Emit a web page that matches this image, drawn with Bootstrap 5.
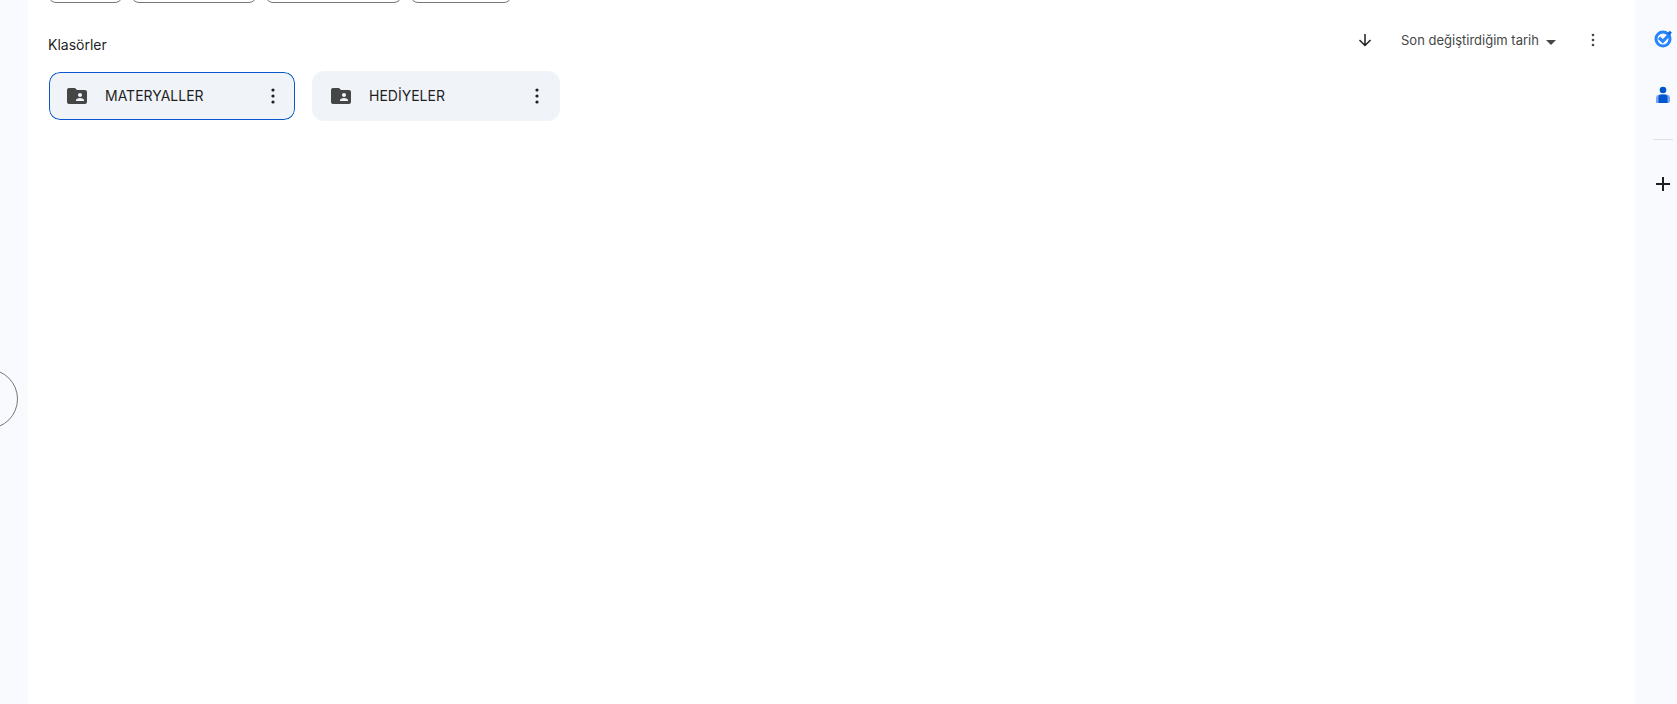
<!DOCTYPE html>
<html lang="tr">
<head>
<meta charset="utf-8">
<meta name="viewport" content="width=device-width, initial-scale=1">
<title>Klasörler</title>
<link href="https://cdn.jsdelivr.net/npm/bootstrap@5.3.0/dist/css/bootstrap.min.css" rel="stylesheet">
<style>
  body { font-family: Inter, Roboto, "Liberation Sans", sans-serif; font-size: 14px; line-height: 20px; color: #1f1f1f; background: #f8fafd; }
  .left-rail { width: 28px; }
  .rail-circle { width: 60px; height: 60px; right: 10px; top: 369px; border: 1px solid #747775; border-radius: 50%; background: transparent; }
  .side-panel { width: 42px; padding: 27px 0 0 14px; }
  .side-panel button, .icon-btn { border: 0; background: none; padding: 0; display: flex; align-items: center; justify-content: center; color: #1f1f1f; }
  .side-panel button { width: 28px; height: 24px; }
  .side-rule { width: 20px; margin: 32px 4px; border-top: 1px solid #dfe1e5; }
  .content-pane { background: #fff; padding: 0 19px 0 20px; }
  .chip-row { height: 3px; gap: 8px; }
  .chip { flex: none; height: 32px; border: 1px solid #747775; border-radius: 8px; background: #fff; padding: 0; }
  .chip-a { width: 75px; } .chip-b { width: 126px; } .chip-c { width: 137px; } .chip-d { width: 102px; }
  .list-head { height: 68px; }
  .list-head h1 { font-size: 14px; line-height: 20px; font-weight: 400; margin: 32px 0 0; }
  .sort-tools { padding: 25px 11px 0 0; }
  .icon-btn { width: 24px; height: 24px; }
  .sort-select { appearance: none; border: 0; color: #444746; width: 156px; height: 24px; padding: 0; font-size: 13px; line-height: 20px;
    background: url("data:image/svg+xml,%3Csvg xmlns='http://www.w3.org/2000/svg' width='10' height='5'%3E%3Cpath d='M0 0h10L5 5z' fill='%23444746'/%3E%3C/svg%3E") right 1px top 12px no-repeat; }
  .folder-grid { display: grid; grid-template-columns: repeat(auto-fill, minmax(220px, 1fr)); gap: 16px; }
  .folder { height: 50px; padding: 0 10px 0 16px; border: 1px solid transparent; border-radius: 12px; background: #f0f4f9; }
  .folder.selected { background-clip: padding-box; box-shadow: inset 0 0 0 1px #0b57d0; border-color: #fff; }
  .folder-name { margin-left: 16px; color: #1f1f1f; }
</style>
</head>
<body>
<svg class="d-none" aria-hidden="true">
  <symbol id="shared-folder" viewBox="0 0 24 24"><path fill="#444746" fill-rule="evenodd" d="M20 6h-8l-2-2H4c-1.100 0-2 .9-2 2v12c0 1.100.9 2 2 2h16c1.100 0 2-.9 2-2V8c0-1.100-.9-2-2-2zm-5 3c1.100 0 2 .9 2 2s-.9 2-2 2-2-.9-2-2 .9-2 2-2zm4 8h-8v-1c0-1.330 2.670-2 4-2s4 .67 4 2z"/></symbol>
  <symbol id="more" viewBox="0 0 24 24"><g fill="currentColor"><circle cx="12" cy="6" r="1.600"/><circle cx="12" cy="12" r="1.600"/><circle cx="12" cy="18" r="1.600"/></g></symbol>
</svg>
<div class="d-flex min-vh-100">
  <aside class="left-rail position-relative flex-shrink-0 overflow-hidden">
    <button class="rail-circle position-absolute" type="button" aria-label="Menü"></button>
  </aside>
  <main class="content-pane flex-grow-1">
    <div class="chip-row d-flex align-items-end overflow-hidden">
      <button class="chip chip-a" type="button" aria-label="Tür"></button>
      <button class="chip chip-b" type="button" aria-label="Kişiler"></button>
      <button class="chip chip-c" type="button" aria-label="Değiştirilme"></button>
      <button class="chip chip-d" type="button" aria-label="Kaynak"></button>
    </div>
    <div class="list-head d-flex justify-content-between">
      <h1>Klasörler</h1>
      <div class="sort-tools d-flex align-items-start">
        <button class="icon-btn" type="button" aria-label="Sıralama yönü"><svg width="18" height="18" viewBox="0 0 18 18" fill="none" stroke="currentColor" stroke-width="1.500"><path d="M9 3v11.500M3.500 9 9 14.500l5.500-5.500"/></svg></button>
        <select class="sort-select ms-4" aria-label="Sıralama"><option>Son değiştirdiğim tarih</option></select>
        <button class="icon-btn ms-4" type="button" aria-label="Diğer seçenekler"><svg width="20" height="22" color="#444746"><use href="#more"/></svg></button>
      </div>
    </div>
    <div class="folder-grid">
      <div class="folder selected d-flex align-items-center">
        <svg width="24" height="24"><use href="#shared-folder"/></svg>
        <a href="#" class="folder-name text-decoration-none flex-grow-1">MATERYALLER</a>
        <button class="icon-btn" type="button" aria-label="MATERYALLER seçenekleri"><svg width="24" height="24"><use href="#more"/></svg></button>
      </div>
      <div class="folder d-flex align-items-center">
        <svg width="24" height="24"><use href="#shared-folder"/></svg>
        <a href="#" class="folder-name text-decoration-none flex-grow-1">HEDİYELER</a>
        <button class="icon-btn" type="button" aria-label="HEDİYELER seçenekleri"><svg width="24" height="24"><use href="#more"/></svg></button>
      </div>
    </div>
  </main>
  <aside class="side-panel flex-shrink-0">
    <button type="button" aria-label="Görevler"><svg width="20" height="20" viewBox="0 0 20 20" fill="none"><circle cx="10" cy="10" r="7" stroke="#2684fc" stroke-width="3"/><path d="m6 8.800 3.800 3.500L17 5" stroke="#2684fc" stroke-width="3.200"/><path d="m14.300 4.300 2.600-2.600 2 2-2.600 2.600z" fill="#0b66e0"/></svg></button>
    <button class="mt-4 pt-2 h-auto" type="button" aria-label="Kişiler"><svg width="20" height="24" viewBox="0 0 20 24"><circle cx="10" cy="7" r="3.300" fill="#0057cc"/><path d="M7 11.500h6a4 4 0 0 1 4 4V18q0 2-2 2H3v-4.500a4 4 0 0 1 4-4z" fill="#7ba2fa"/><path d="M8.500 11.500h3q3 0 3 3V20h-9v-5.500q0-3 3-3z" fill="#0057cc"/></svg></button>
    <div class="side-rule"></div>
    <button type="button" aria-label="Eklenti al"><svg width="14" height="14" viewBox="0 0 14 14" stroke="currentColor" stroke-width="2"><path d="M7 0v14M0 7h14"/></svg></button>
  </aside>
</div>
<script src="https://cdn.jsdelivr.net/npm/bootstrap@5.3.0/dist/js/bootstrap.bundle.min.js"></script>
</body>
</html>
